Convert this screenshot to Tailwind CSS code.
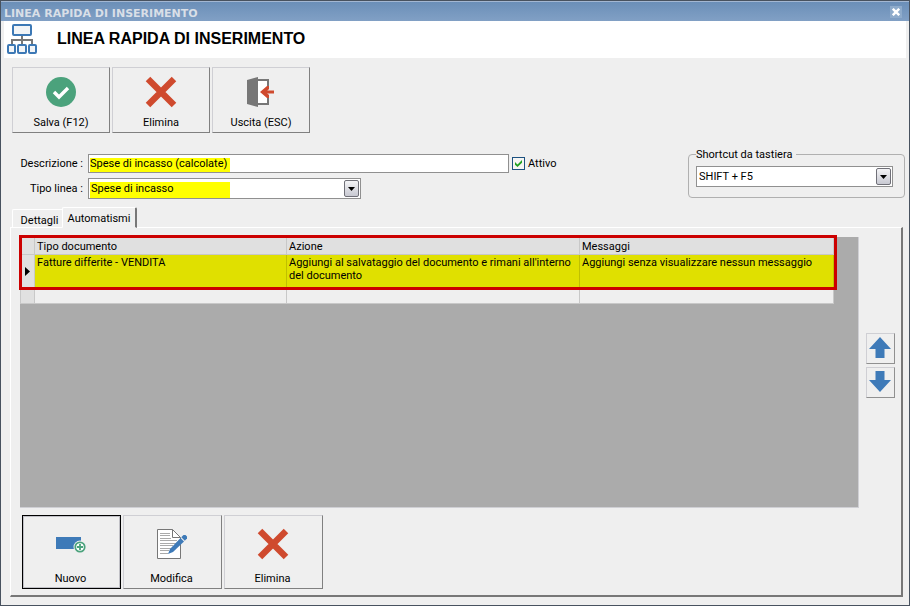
<!doctype html>
<html lang="it">

<head>
  <meta charset="UTF-8" />
  <meta name="viewport" content="width=device-width, initial-scale=1">
  <title>Linea rapida di inserimento</title>
  <script src="https://cdn.jsdelivr.net/npm/@tailwindcss/browser@4"></script>
</head>

<body
  class="flex min-h-screen flex-col border border-[#48525f] bg-[#efefef] font-['Tahoma','Roboto',sans-serif] text-[11px] leading-[13px] text-black">
  <!-- title bar -->
  <div
    class="flex h-5 items-center justify-between border-t border-[#a3b7d2] bg-linear-to-b from-[#6b8fb8] to-[#81a0c5] pr-[7px] pl-[3px] pt-1">
    <span class="font-['DejaVu_Sans',sans-serif] text-[11px] font-bold text-[#d9dfe7]">LINEA RAPIDA DI INSERIMENTO</span>
    <button title="Chiudi" class="mb-1 flex size-3 items-center justify-center bg-[#8eabcb]">
      <svg width="8" height="8" viewBox="0 0 8 8" stroke="#fff" stroke-width="2.4">
        <path d="M.8 .8l6.4 6.4M7.2 .8L.8 7.2" />
      </svg>
    </button>
  </div>

  <header class="mx-[3px] flex h-[37px] items-center gap-5 bg-white pb-0.5 pl-[3px]">
    <svg width="30" height="32" viewBox="0 0 30 32" fill="none">
      <path d="M15 12v10M5 22v-5h20v5" stroke="#777" stroke-width="2" />
      <g fill="#f2f4f6" stroke="#3c78b5" stroke-width="2">
        <rect x="6" y="2" width="18" height="10" rx="1" />
        <rect x="1" y="22" width="7" height="8" rx="1" />
        <rect x="11" y="22" width="8" height="8" rx="1" />
        <rect x="22" y="22" width="7" height="8" rx="1" />
      </g>
    </svg>
    <h1 class="font-['Liberation_Sans',sans-serif] text-base font-bold">LINEA RAPIDA DI INSERIMENTO</h1>
  </header>

  <!-- toolbar -->
  <div class="mt-[9px] ml-[11px] flex gap-0.5">
    <button
      class="flex h-[66px] w-[98px] flex-col items-center justify-between border border-t-[#cfcfd4] border-r-[#808080] border-b-[#808080] border-l-[#cfcfd4] pt-2 pb-[3px]">
      <svg width="32" height="32" viewBox="0 0 32 32" fill="none">
        <circle cx="16" cy="16" r="15" fill="#4ba27c" />
        <path d="M9 16l5 5 9-9" stroke="#fff" stroke-width="3.4" />
      </svg>
      Salva (F12)
    </button>
    <button
      class="flex h-[66px] w-[98px] flex-col items-center justify-between border border-t-[#cfcfd4] border-r-[#808080] border-b-[#808080] border-l-[#cfcfd4] pt-2 pb-[3px]">
      <svg width="32" height="32" viewBox="0 0 32 32">
        <path d="M3 3L29 29M29 3L3 29" stroke="#cf4a2e" stroke-width="6.4" />
      </svg>
      Elimina
    </button>
    <button
      class="flex h-[66px] w-[98px] flex-col items-center justify-between border border-t-[#cfcfd4] border-r-[#808080] border-b-[#808080] border-l-[#cfcfd4] pt-2 pb-[3px]">
      <svg width="32" height="32" viewBox="0 0 32 32">
        <path d="M13 5h9v23h-9z" fill="#fff" />
        <path d="M13 4h10v6M23 22v6H13" fill="none" stroke="#777" stroke-width="2" />
        <path d="M2 4l11-3v30L2 28z" fill="#777" />
        <path d="M29 16H18" fill="none" stroke="#cf4a2e" stroke-width="3" />
        <path d="M15 16l7-6h2v3l-3 3 3 3v3h-2z" fill="#cf4a2e" />
      </svg>
      Uscita (ESC)
    </button>
  </div>

  <!-- form -->
  <div class="mt-[21px] mr-1 flex items-start justify-between">
    <div class="flex flex-col gap-[5px]">
      <div class="flex items-center">
        <label for="descrizione" class="w-[87px] pr-[5px] text-right">Descrizione :</label>
        <input id="descrizione" type="text" value="Spese di incasso (calcolate)"
          class="h-[19px] w-[421px] border border-[#909090] bg-white bg-[linear-gradient(#ff0,#ff0)] bg-[length:140px_14px] bg-[position:1px_100%] bg-no-repeat pl-px">
        <label class="ml-[3px] flex items-center gap-[3px]">
          <span class="relative block size-[13px]">
            <input type="checkbox" checked class="block size-[13px] appearance-none border border-[#1c5180] bg-[#f5f5f3]">
            <svg class="pointer-events-none absolute top-[3px] left-[3px]" width="7" height="7" viewBox="0 0 7 7"
              fill="#21a121">
              <path d="M0 2l2.500 2.500L7 0v2.700L2.500 7 0 4.700z" />
            </svg>
          </span>
          Attivo
        </label>
      </div>
      <div class="flex items-center">
        <label for="tipo" class="w-[87px] pr-[5px] text-right">Tipo linea :</label>
        <div class="relative">
          <select id="tipo"
            class="block h-[21px] w-[273px] appearance-none border border-[#909090] bg-white bg-[linear-gradient(#ff0,#ff0)] bg-[length:140px_16px] bg-[position:1px_100%] bg-no-repeat pl-0.5">
            <option>Spese di incasso</option>
          </select>
          <span
            class="pointer-events-none absolute top-0.5 right-0.5 flex h-[17px] w-[15px] items-center justify-center rounded-[2px] border border-[#707078] bg-linear-to-b from-[#f4f4f6] to-[#c8c9d2]">
            <svg width="7" height="4" viewBox="0 0 7 4">
              <path d="M0 0h7L3.500 4z" />
            </svg>
          </span>
        </div>
      </div>
    </div>

    <fieldset class="-mt-[6px] w-[217px] rounded-[4px] border border-[#b0b0b0] px-[7px] pb-[10px]">
      <legend class="pr-1">Shortcut da tastiera</legend>
      <div class="relative mt-[5px] mr-1">
        <select aria-label="Shortcut da tastiera"
          class="block h-[21px] w-full appearance-none border border-[#909090] bg-white pl-0.5">
          <option>SHIFT + F5</option>
        </select>
        <span
          class="pointer-events-none absolute top-0.5 right-0.5 flex h-[17px] w-[15px] items-center justify-center rounded-[2px] border border-[#707078] bg-linear-to-b from-[#f4f4f6] to-[#c8c9d2]">
          <svg width="7" height="4" viewBox="0 0 7 4">
            <path d="M0 0h7L3.500 4z" />
          </svg>
        </span>
      </div>
    </fieldset>
  </div>

  <!-- tabs -->
  <div class="mt-2 ml-[11px] flex items-end">
    <button class="h-[18px] w-[50px] rounded-tl-[2px] border-t border-l border-white pt-1 pl-1">Dettagli</button>
    <button
      class="relative z-10 -mb-px h-[21px] w-[75px] rounded-t-[2px] border border-r-2 border-white border-r-[#777] border-b-[#efefef] bg-[#efefef] pt-0.5">Automatismi</button>
  </div>
  <main
    class="mr-[6px] mb-2 ml-[9px] flex flex-1 flex-col border border-t-white border-r-2 border-b-2 border-l-white border-r-[#777] border-b-[#777] pt-[9px] pr-[6px] pb-[6px] pl-[9px]">
    <div class="flex flex-1 gap-[7px]">
      <div class="relative flex-1 border-r border-b border-[#cfcfd4] bg-[#ababab]">
        <table class="w-[814px] table-fixed border-collapse text-left">
          <thead>
            <tr class="h-[17px] bg-[#e0e0e0] align-top">
              <th class="w-[14px] border border-[#c8c8c8]"></th>
              <th class="w-[252px] border border-[#c8c8c8] pt-0.5 pl-0.5 font-normal">Tipo documento</th>
              <th class="w-[293px] border border-[#c8c8c8] pt-0.5 pl-0.5 font-normal">Azione</th>
              <th class="border border-[#c8c8c8] pt-0.5 pl-0.5 font-normal">Messaggi</th>
            </tr>
          </thead>
          <tbody>
            <tr class="h-[33px] bg-[#e0e000] align-top">
              <td class="border border-[#c8c8c8] bg-[#e0e0e0] align-middle">
                <svg class="ml-1" width="5" height="9" viewBox="0 0 5 9">
                  <path d="M0 0l5 4.500L0 9z" />
                </svg>
              </td>
              <td class="border border-[#c0c000] pt-px pl-0.5">Fatture differite - VENDITA</td>
              <td class="border border-[#c0c000] pt-px pl-0.5">Aggiungi al salvataggio del documento e rimani all'interno del documento</td>
              <td class="border border-[#c0c000] pt-px pl-0.5">Aggiungi senza visualizzare nessun messaggio</td>
            </tr>
            <tr class="h-4 bg-[#efefef]">
              <td class="border border-[#c8c8c8] bg-[#e0e0e0]"></td>
              <td class="border border-[#c8c8c8]"></td>
              <td class="border border-[#c8c8c8]"></td>
              <td class="border border-[#c8c8c8]"></td>
            </tr>
          </tbody>
        </table>
        <!-- highlight frame over the first rows -->
        <div class="pointer-events-none absolute -top-0.5 -left-px h-[55px] w-[818px] border-3 border-[#cc0000]"></div>
      </div>
      <div class="flex flex-col justify-center gap-[3px] pb-[14px]">
        <button title="Su"
          class="flex h-[31px] w-[29px] items-center justify-center border border-t-[#cfcfd4] border-r-[#909090] border-b-[#909090] border-l-[#cfcfd4] pr-0.5 pb-0.5">
          <svg width="22" height="22" viewBox="0 0 22 22" fill="#3e7ab8">
            <path d="M11 0l11 12h-6.500v9h-9v-9H0z" />
          </svg>
        </button>
        <button title="Giù"
          class="flex h-[31px] w-[29px] items-center justify-center border border-t-[#cfcfd4] border-r-[#909090] border-b-[#909090] border-l-[#cfcfd4] pr-0.5 pb-0.5">
          <svg width="22" height="22" viewBox="0 0 22 22" fill="#3e7ab8">
            <path d="M11 21l11-12h-6.500V0h-9v9H0z" />
          </svg>
        </button>
      </div>
    </div>

    <div class="mt-[7px] ml-0.5 flex gap-0.5">
      <button
        class="flex h-[74px] w-[99px] flex-col items-center justify-between border border-black pt-3 pr-0.5 pb-[3px] inset-ring-1 inset-ring-[#c0c0c6]">
        <svg width="32" height="32" viewBox="0 0 32 32">
          <path d="M1 9h25v12H1z" fill="#3e7ab8" />
          <circle cx="25" cy="19" r="6.500" fill="#efefef" />
          <circle cx="25" cy="19" r="4.700" fill="#fff" stroke="#4ba27c" stroke-width="1.800" />
          <path d="M25 16v6M22 19h6" stroke="#4ba27c" stroke-width="1.800" />
        </svg>
        Nuovo
      </button>
      <button
        class="flex h-[74px] w-[99px] flex-col items-center justify-between border border-t-[#cfcfd4] border-r-[#808080] border-b-[#808080] border-l-[#cfcfd4] pt-3 pr-0.5 pb-[3px]">
        <svg width="32" height="32" viewBox="0 0 32 32" fill="none">
          <path d="M1.500 1.500h15l8 8v21h-23z" fill="#fff" stroke="#777" />
          <path d="M16.500 1.500v8h8" stroke="#777" />
          <path d="M4 5.500h10M4 7.500h10M4 10.500h11M4 12.500h17M4 15.500h16M4 17.500h13M4 20.500h11M4 22.500h9M4 25.500h8" stroke="#aaa" />
          <path d="M12 26l2-5L24.500 10l3.500 3.500L17 24z" fill="#3e7ab8" />
          <path d="M25.300 9.200l2.200-2.200h2l1.500 1.500v2l-2.200 2.200z" fill="#3e7ab8" />
        </svg>
        Modifica
      </button>
      <button
        class="flex h-[74px] w-[99px] flex-col items-center justify-between border border-t-[#cfcfd4] border-r-[#808080] border-b-[#808080] border-l-[#cfcfd4] pt-3 pr-0.5 pb-[3px]">
        <svg width="32" height="32" viewBox="0 0 32 32">
          <path d="M3 3L29 29M29 3L3 29" stroke="#cf4a2e" stroke-width="6.400" />
        </svg>
        Elimina
      </button>
    </div>
  </main>
</body>

</html>
